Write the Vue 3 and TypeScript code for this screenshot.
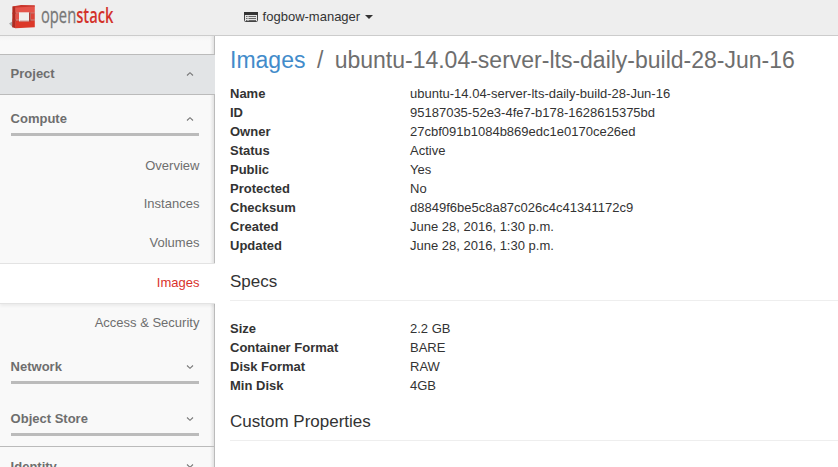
<script setup lang="ts">
interface Entry {
  label: string
  value: string
}

const links: string[] = ['Overview', 'Instances', 'Volumes', 'Images', 'Access & Security']
const active = 'Images'
const imageName = 'ubuntu-14.04-server-lts-daily-build-28-Jun-16'

const info: Entry[] = [
  { label: 'Name', value: imageName },
  { label: 'ID', value: '95187035-52e3-4fe7-b178-1628615375bd' },
  { label: 'Owner', value: '27cbf091b1084b869edc1e0170ce26ed' },
  { label: 'Status', value: 'Active' },
  { label: 'Public', value: 'Yes' },
  { label: 'Protected', value: 'No' },
  { label: 'Checksum', value: 'd8849f6be5c8a87c026c4c41341172c9' },
  { label: 'Created', value: 'June 28, 2016, 1:30 p.m.' },
  { label: 'Updated', value: 'June 28, 2016, 1:30 p.m.' },
]

const specs: Entry[] = [
  { label: 'Size', value: '2.2 GB' },
  { label: 'Container Format', value: 'BARE' },
  { label: 'Disk Format', value: 'RAW' },
  { label: 'Min Disk', value: '4GB' },
]
</script>

<template>
  <div class="page">
    <header class="topbar">
      <svg class="logo" width="120" height="35" viewBox="0 0 120 35" role="img">
        <path d="M9 23.5 13 21v6.5z" fill="#aaa" />
        <path d="M12.4 6.5 15.8 6v22.3l-3.6-1.1z" fill="#b02a20" />
        <path d="M15.5 6.5 34.8 6v6.8H15.5z" fill="#e5534a" />
        <path d="M12.4 6.5 21 5l13.8.2v1.2l-19.2 1z" fill="#c9352b" />
        <path d="M15.5 13.4H19v6.3h-3.5z" fill="#e5534a" />
        <path d="M30.5 13.4h4.3v6.3h-4.3z" fill="#dc4439" />
        <path d="M15.5 20.4h19.3v6.9l-19.3.9z" fill="#dc3829" />
        <path d="M12.3 12.7H19v.7h-6.7zM30.5 12.7h4.3v.7h-4.3zM12.3 19.7H19v.7h-6.7zM30 19.7h4.8v.7H30z" fill="#b5352b" />
        <path d="M19 12.4h10v9.2H19z" fill="#f1eeee" />
        <path d="M29 12.4h1.6v9.2H29z" fill="#a5403a" />
        <path d="M19 21.6l1-.8h9l1.6.8z" fill="#b9443b" />
        <text x="61.2" y="22.5" transform="scale(.67 1)" class="brand">open<tspan class="red">stack</tspan></text>
      </svg>
      <div class="switcher">
        <svg width="14" height="12" viewBox="0 0 14 12">
          <rect x=".5" y="1.5" width="13" height="9" rx="1" fill="#e4e4e4" stroke="#444" />
          <path d="M0 1h14v3H0z" fill="#333" />
          <path d="M2 5.5h1.5M2 7.5h1.5M2 9.5h1.5M4.5 5.5H12M4.5 7.5H12M4.5 9.5H12" stroke="#666" />
        </svg>
        <span>fogbow-manager</span>
        <i class="caret"></i>
      </div>
    </header>

    <div class="body">
      <nav class="sidebar">
        <div class="section project">
          <span>Project</span>
          <svg class="chevron" width="8" height="6" viewBox="0 0 8 6"><path d="M1 4.5 4 1.7l3 2.8" /></svg>
        </div>
        <div class="group compute">
          <span>Compute</span>
          <svg class="chevron" width="8" height="6" viewBox="0 0 8 6"><path d="M1 4.5 4 1.7l3 2.8" /></svg>
        </div>
        <ul class="links">
          <li v-for="link in links" :key="link" :class="{ active: link === active }">{{ link }}</li>
        </ul>
        <div class="group network">
          <span>Network</span>
          <svg class="chevron" width="8" height="6" viewBox="0 0 8 6"><path d="m1 1.5 3 2.8 3-2.8" /></svg>
        </div>
        <div class="group store">
          <span>Object Store</span>
          <svg class="chevron" width="8" height="6" viewBox="0 0 8 6"><path d="m1 1.5 3 2.8 3-2.8" /></svg>
        </div>
        <div class="section identity">
          <span>Identity</span>
          <svg class="chevron" width="8" height="6" viewBox="0 0 8 6"><path d="m1 1.5 3 2.8 3-2.8" /></svg>
        </div>
      </nav>

      <main class="content">
        <h1><a>Images</a><span class="slash">/</span>{{ imageName }}</h1>
        <dl>
          <template v-for="row in info" :key="row.label">
            <dt>{{ row.label }}</dt>
            <dd>{{ row.value }}</dd>
          </template>
        </dl>
        <h4>Specs</h4>
        <dl>
          <template v-for="row in specs" :key="row.label">
            <dt>{{ row.label }}</dt>
            <dd>{{ row.value }}</dd>
          </template>
        </dl>
        <h4>Custom Properties</h4>
      </main>
    </div>
  </div>
</template>

<style>
body {
  margin: 0;
  overflow: hidden;
}
</style>

<style scoped>
.page {
  display: flex;
  flex-direction: column;
  height: 467px;
  overflow: hidden;
  background: #fff;
  color: #333;
  font: 13px/19px "Liberation Sans", Arial, sans-serif;
}
.topbar {
  display: flex;
  flex: none;
  height: 35px;
  border-bottom: 1px solid #ccc;
  background: #eee;
}
.logo {
  flex: none;
}
.brand {
  font: 22px "Open Sans", sans-serif;
  fill: #777;
  stroke: #777;
  stroke-width: 0.3px;
}
.brand .red {
  font-weight: 600;
  fill: #d3322b;
  stroke: none;
}
.switcher {
  display: flex;
  align-items: center;
  height: 33px;
  margin-left: 124px;
}
.switcher span {
  margin: 0 4.5px 0 4.6px;
}
.caret {
  border: 4px solid transparent;
  border-top-color: #333;
  border-bottom: 0;
}
.body {
  display: flex;
  flex: 1;
  min-height: 0;
}
.sidebar {
  box-sizing: border-box;
  flex: none;
  width: 215px;
  height: 431px;
  padding-top: 18px;
  overflow: hidden;
  background:
    linear-gradient(to left, #bbb 1px, #e2e2e2 1px, rgba(249, 249, 249, 0) 5px),
    linear-gradient(#f3f3f3, #f9f9f9 5px);
  color: #6e6e6e;
}
.section,
.group {
  box-sizing: border-box;
  display: flex;
  align-items: center;
  justify-content: space-between;
  font-weight: bold;
}
.section {
  height: 41px;
  padding: 0 21px 2px 10.6px;
  border-top: 1px solid #bbb;
}
.project {
  border-bottom: 1px solid #bbb;
  background: #e2e4e6;
}
.group {
  height: 27px;
  margin: 0 16px 0 10.6px;
  padding: 0 5px 5px 0;
  border-bottom: 3px solid #bbb;
}
.compute {
  margin-top: 14px;
}
.chevron {
  fill: none;
  stroke: #777;
  stroke-width: 1.1;
}
.links {
  margin: 10px 0 0;
  padding: 0;
  list-style: none;
}
.links li {
  box-sizing: border-box;
  height: 39px;
  padding: 10px 15.6px 0 0;
  text-align: right;
}
.links li:first-child {
  height: 38px;
}
.links li.active {
  height: 41px;
  margin-top: 1px;
  padding-top: 9px;
  border: solid #e3e3e3;
  border-width: 1px 0;
  background: #fff;
  box-shadow: 0 2px 3px rgba(0, 0, 0, 0.06);
  color: #d9322b;
}
.links li.active + li {
  padding-top: 9px;
}
.network {
  margin-top: 14px;
}
.store {
  margin-top: 25px;
}
.identity {
  margin-top: 10px;
}
.content {
  flex: 1;
  min-width: 0;
  padding: 11px 0 0 15px;
}
h1 {
  margin: 0 0 11px;
  color: #6e6e6e;
  font-size: 23px;
  font-weight: normal;
  line-height: 26px;
  white-space: nowrap;
}
h1 a {
  color: #428bca;
}
.slash {
  margin: 0 11.3px 0 11.5px;
}
dl {
  display: grid;
  grid-template-columns: 180px 1fr;
  grid-auto-rows: 19px;
  margin: 0;
}
dt {
  font-weight: bold;
}
dd {
  margin: 0;
}
h4 {
  height: 28px;
  margin: 17px 0 18px;
  border-bottom: 1px solid #eee;
  font-size: 17px;
  font-weight: normal;
  line-height: 19px;
}
</style>
